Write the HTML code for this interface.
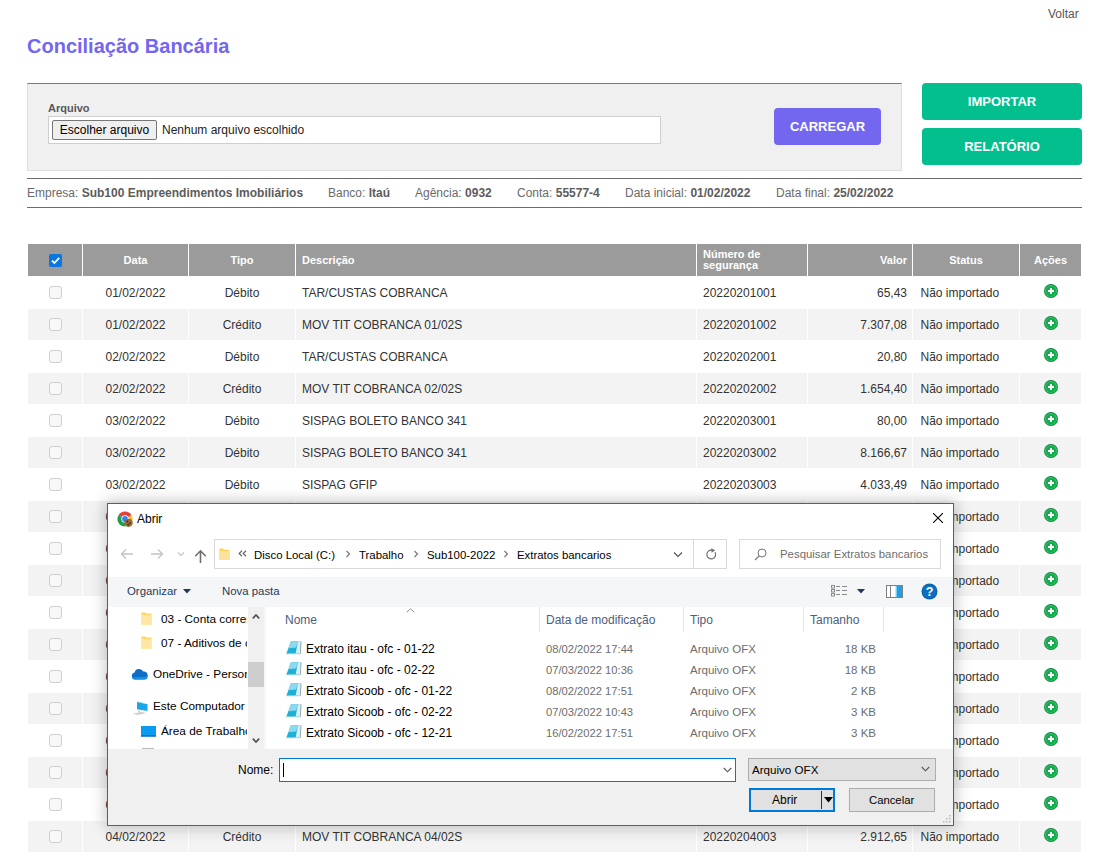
<!DOCTYPE html>
<html><head><meta charset="utf-8">
<style>
*{box-sizing:border-box}
html,body{margin:0;padding:0}
body{width:1105px;height:857px;overflow:hidden;position:relative;background:#fff;font-family:"Liberation Sans",sans-serif;font-size:12px;color:#333}
.a{position:absolute;white-space:nowrap}
#voltar{left:1048px;top:7px;line-height:14px;color:#555}
#title{left:27px;top:34px;line-height:24px;font-size:20px;font-weight:bold;color:#7367f0}
#panel{left:27px;top:83px;width:875px;height:88px;background:#f0f0f0;border:1px solid #dedede;border-top:1px solid #14a98f}
#lbl{left:48px;top:102px;line-height:13px;font-size:11px;font-weight:bold;color:#585858}
#inp{left:48px;top:116px;width:613px;height:28px;background:#fff;border:1px solid #cfcfcf}
#chooser{left:52px;top:120px;width:105px;height:20px;background:#efefef;border:1px solid #767676;border-radius:2px;color:#000;text-align:center;line-height:18px}
#nenhum{left:162px;top:123px;line-height:14px;color:#222}
.btn{position:absolute;color:#fff;font-weight:bold;font-size:13px;text-align:center;border-radius:4px}
#carregar{left:774px;top:108px;width:107px;height:37px;background:#7367f0;line-height:37px}
#importar{left:922px;top:83px;width:160px;height:37px;background:#02bf8d;line-height:37px}
#relatorio{left:922px;top:128px;width:160px;height:37px;background:#02bf8d;line-height:37px}
.hr{position:absolute;left:27px;width:1055px;height:1px;background:#6b6b6b}
.info{top:186px;line-height:14px;color:#6a6a6a}
.info b{color:#5c5c5c}
/* table */
#tbl{position:absolute;left:27px;top:243px;border-collapse:separate;border-spacing:1px;table-layout:fixed;width:1055px}
#tbl th{background:#9b9b9b;color:#fff;font-size:11px;font-weight:bold;height:32px;padding:0 6px;line-height:11px}
#tbl td{height:31px;padding:0 6px;color:#333;white-space:nowrap;line-height:14px}
#tbl tbody tr:nth-child(even) td{background:#f3f3f3}
#tbl tbody tr:nth-child(odd) td{background:#fff}
.c{text-align:center}
.l{text-align:left}
.r{text-align:right;padding-right:5px !important}
.st{padding-left:7.5px !important}
.cb{display:inline-block;width:13px;height:13px;border:1px solid #cfcfcf;border-radius:3px;background:#f8f8f8;vertical-align:middle;position:relative;top:-1px}
.cbh{display:inline-block;width:13px;height:13px;border-radius:2px;background:#0b75e0;vertical-align:middle;position:relative}
.plus{display:inline-block;width:14px;height:14px;vertical-align:middle;position:relative;top:-2px}
</style></head>
<body>
<div class="a" id="voltar">Voltar</div>
<div class="a" id="title">Conciliação Bancária</div>
<div class="a" id="panel"></div>
<div class="a" id="lbl">Arquivo</div>
<div class="a" id="inp"></div>
<div class="a" id="chooser">Escolher arquivo</div>
<div class="a" id="nenhum">Nenhum arquivo escolhido</div>
<div class="btn" id="carregar">CARREGAR</div>
<div class="btn" id="importar">IMPORTAR</div>
<div class="btn" id="relatorio">RELATÓRIO</div>
<div class="hr" style="top:178px"></div>
<div class="a info" style="left:27px">Empresa: <b>Sub100 Empreendimentos Imobiliários</b></div>
<div class="a info" style="left:328px">Banco: <b>Itaú</b></div>
<div class="a info" style="left:415px">Agência: <b>0932</b></div>
<div class="a info" style="left:517px">Conta: <b>55577-4</b></div>
<div class="a info" style="left:625px">Data inicial: <b>01/02/2022</b></div>
<div class="a info" style="left:776px">Data final: <b>25/02/2022</b></div>
<div class="hr" style="top:207px"></div>
<!--TABLE-->
<table id="tbl"><colgroup><col style="width:54px"><col style="width:105px"><col style="width:106px"><col style="width:400px"><col style="width:110px"><col style="width:104px"><col style="width:106px"><col style="width:61px"></colgroup>
<thead><tr><th class="c"><span class="cbh"><svg width="13" height="13" viewBox="0 0 13 13" style="position:absolute;left:0;top:0"><path d="M3 6.6l2.4 2.4L10.2 3.8" fill="none" stroke="#fff" stroke-width="1.8"/></svg></span></th><th class="c">Data</th><th class="c">Tipo</th><th class="l">Descrição</th><th class="l">Número de<br>segurança</th><th class="r">Valor</th><th class="c">Status</th><th class="c">Ações</th></tr></thead><tbody>
<tr><td class="c"><span class="cb"></span></td><td class="c">01/02/2022</td><td class="c">Débito</td><td class="l">TAR/CUSTAS COBRANCA</td><td class="l">20220201001</td><td class="r">65,43</td><td class="l st">Não importado</td><td class="c"><svg class="plus" width="14" height="14" viewBox="0 0 14 14"><circle cx="7" cy="7" r="7" fill="#0c8438"/><circle cx="7" cy="7" r="6.1" fill="#3acb73"/><circle cx="7" cy="7" r="5.2" fill="#14ad4b"/><path d="M6 4h2v2h2v2H8v2H6V8H4V6h2z" fill="#fff"/></svg></td></tr>
<tr><td class="c"><span class="cb"></span></td><td class="c">01/02/2022</td><td class="c">Crédito</td><td class="l">MOV TIT COBRANCA 01/02S</td><td class="l">20220201002</td><td class="r">7.307,08</td><td class="l st">Não importado</td><td class="c"><svg class="plus" width="14" height="14" viewBox="0 0 14 14"><circle cx="7" cy="7" r="7" fill="#0c8438"/><circle cx="7" cy="7" r="6.1" fill="#3acb73"/><circle cx="7" cy="7" r="5.2" fill="#14ad4b"/><path d="M6 4h2v2h2v2H8v2H6V8H4V6h2z" fill="#fff"/></svg></td></tr>
<tr><td class="c"><span class="cb"></span></td><td class="c">02/02/2022</td><td class="c">Débito</td><td class="l">TAR/CUSTAS COBRANCA</td><td class="l">20220202001</td><td class="r">20,80</td><td class="l st">Não importado</td><td class="c"><svg class="plus" width="14" height="14" viewBox="0 0 14 14"><circle cx="7" cy="7" r="7" fill="#0c8438"/><circle cx="7" cy="7" r="6.1" fill="#3acb73"/><circle cx="7" cy="7" r="5.2" fill="#14ad4b"/><path d="M6 4h2v2h2v2H8v2H6V8H4V6h2z" fill="#fff"/></svg></td></tr>
<tr><td class="c"><span class="cb"></span></td><td class="c">02/02/2022</td><td class="c">Crédito</td><td class="l">MOV TIT COBRANCA 02/02S</td><td class="l">20220202002</td><td class="r">1.654,40</td><td class="l st">Não importado</td><td class="c"><svg class="plus" width="14" height="14" viewBox="0 0 14 14"><circle cx="7" cy="7" r="7" fill="#0c8438"/><circle cx="7" cy="7" r="6.1" fill="#3acb73"/><circle cx="7" cy="7" r="5.2" fill="#14ad4b"/><path d="M6 4h2v2h2v2H8v2H6V8H4V6h2z" fill="#fff"/></svg></td></tr>
<tr><td class="c"><span class="cb"></span></td><td class="c">03/02/2022</td><td class="c">Débito</td><td class="l">SISPAG BOLETO BANCO 341</td><td class="l">20220203001</td><td class="r">80,00</td><td class="l st">Não importado</td><td class="c"><svg class="plus" width="14" height="14" viewBox="0 0 14 14"><circle cx="7" cy="7" r="7" fill="#0c8438"/><circle cx="7" cy="7" r="6.1" fill="#3acb73"/><circle cx="7" cy="7" r="5.2" fill="#14ad4b"/><path d="M6 4h2v2h2v2H8v2H6V8H4V6h2z" fill="#fff"/></svg></td></tr>
<tr><td class="c"><span class="cb"></span></td><td class="c">03/02/2022</td><td class="c">Débito</td><td class="l">SISPAG BOLETO BANCO 341</td><td class="l">20220203002</td><td class="r">8.166,67</td><td class="l st">Não importado</td><td class="c"><svg class="plus" width="14" height="14" viewBox="0 0 14 14"><circle cx="7" cy="7" r="7" fill="#0c8438"/><circle cx="7" cy="7" r="6.1" fill="#3acb73"/><circle cx="7" cy="7" r="5.2" fill="#14ad4b"/><path d="M6 4h2v2h2v2H8v2H6V8H4V6h2z" fill="#fff"/></svg></td></tr>
<tr><td class="c"><span class="cb"></span></td><td class="c">03/02/2022</td><td class="c">Débito</td><td class="l">SISPAG GFIP</td><td class="l">20220203003</td><td class="r">4.033,49</td><td class="l st">Não importado</td><td class="c"><svg class="plus" width="14" height="14" viewBox="0 0 14 14"><circle cx="7" cy="7" r="7" fill="#0c8438"/><circle cx="7" cy="7" r="6.1" fill="#3acb73"/><circle cx="7" cy="7" r="5.2" fill="#14ad4b"/><path d="M6 4h2v2h2v2H8v2H6V8H4V6h2z" fill="#fff"/></svg></td></tr>
<tr><td class="c"><span class="cb"></span></td><td class="c">03/02/2022</td><td class="c">Débito</td><td class="l">SISPAG TRIBUTOS</td><td class="l">20220203004</td><td class="r">1.210,33</td><td class="l st">Não importado</td><td class="c"><svg class="plus" width="14" height="14" viewBox="0 0 14 14"><circle cx="7" cy="7" r="7" fill="#0c8438"/><circle cx="7" cy="7" r="6.1" fill="#3acb73"/><circle cx="7" cy="7" r="5.2" fill="#14ad4b"/><path d="M6 4h2v2h2v2H8v2H6V8H4V6h2z" fill="#fff"/></svg></td></tr>
<tr><td class="c"><span class="cb"></span></td><td class="c">03/02/2022</td><td class="c">Débito</td><td class="l">SISPAG FORNECEDORES</td><td class="l">20220203005</td><td class="r">3.450,00</td><td class="l st">Não importado</td><td class="c"><svg class="plus" width="14" height="14" viewBox="0 0 14 14"><circle cx="7" cy="7" r="7" fill="#0c8438"/><circle cx="7" cy="7" r="6.1" fill="#3acb73"/><circle cx="7" cy="7" r="5.2" fill="#14ad4b"/><path d="M6 4h2v2h2v2H8v2H6V8H4V6h2z" fill="#fff"/></svg></td></tr>
<tr><td class="c"><span class="cb"></span></td><td class="c">03/02/2022</td><td class="c">Débito</td><td class="l">TAR/CUSTAS COBRANCA</td><td class="l">20220203006</td><td class="r">12,40</td><td class="l st">Não importado</td><td class="c"><svg class="plus" width="14" height="14" viewBox="0 0 14 14"><circle cx="7" cy="7" r="7" fill="#0c8438"/><circle cx="7" cy="7" r="6.1" fill="#3acb73"/><circle cx="7" cy="7" r="5.2" fill="#14ad4b"/><path d="M6 4h2v2h2v2H8v2H6V8H4V6h2z" fill="#fff"/></svg></td></tr>
<tr><td class="c"><span class="cb"></span></td><td class="c">03/02/2022</td><td class="c">Crédito</td><td class="l">MOV TIT COBRANCA 03/02S</td><td class="l">20220203007</td><td class="r">5.880,12</td><td class="l st">Não importado</td><td class="c"><svg class="plus" width="14" height="14" viewBox="0 0 14 14"><circle cx="7" cy="7" r="7" fill="#0c8438"/><circle cx="7" cy="7" r="6.1" fill="#3acb73"/><circle cx="7" cy="7" r="5.2" fill="#14ad4b"/><path d="M6 4h2v2h2v2H8v2H6V8H4V6h2z" fill="#fff"/></svg></td></tr>
<tr><td class="c"><span class="cb"></span></td><td class="c">04/02/2022</td><td class="c">Débito</td><td class="l">SISPAG SALARIOS</td><td class="l">20220204001</td><td class="r">9.320,55</td><td class="l st">Não importado</td><td class="c"><svg class="plus" width="14" height="14" viewBox="0 0 14 14"><circle cx="7" cy="7" r="7" fill="#0c8438"/><circle cx="7" cy="7" r="6.1" fill="#3acb73"/><circle cx="7" cy="7" r="5.2" fill="#14ad4b"/><path d="M6 4h2v2h2v2H8v2H6V8H4V6h2z" fill="#fff"/></svg></td></tr>
<tr><td class="c"><span class="cb"></span></td><td class="c">04/02/2022</td><td class="c">Débito</td><td class="l">TAR/CUSTAS COBRANCA</td><td class="l">20220204002</td><td class="r">18,60</td><td class="l st">Não importado</td><td class="c"><svg class="plus" width="14" height="14" viewBox="0 0 14 14"><circle cx="7" cy="7" r="7" fill="#0c8438"/><circle cx="7" cy="7" r="6.1" fill="#3acb73"/><circle cx="7" cy="7" r="5.2" fill="#14ad4b"/><path d="M6 4h2v2h2v2H8v2H6V8H4V6h2z" fill="#fff"/></svg></td></tr>
<tr><td class="c"><span class="cb"></span></td><td class="c">04/02/2022</td><td class="c">Débito</td><td class="l">SISPAG BOLETO BANCO 341</td><td class="l">20220204004</td><td class="r">640,00</td><td class="l st">Não importado</td><td class="c"><svg class="plus" width="14" height="14" viewBox="0 0 14 14"><circle cx="7" cy="7" r="7" fill="#0c8438"/><circle cx="7" cy="7" r="6.1" fill="#3acb73"/><circle cx="7" cy="7" r="5.2" fill="#14ad4b"/><path d="M6 4h2v2h2v2H8v2H6V8H4V6h2z" fill="#fff"/></svg></td></tr>
<tr><td class="c"><span class="cb"></span></td><td class="c">04/02/2022</td><td class="c">Débito</td><td class="l">SISPAG BOLETO BANCO 341</td><td class="l">20220204005</td><td class="r">1.120,00</td><td class="l st">Não importado</td><td class="c"><svg class="plus" width="14" height="14" viewBox="0 0 14 14"><circle cx="7" cy="7" r="7" fill="#0c8438"/><circle cx="7" cy="7" r="6.1" fill="#3acb73"/><circle cx="7" cy="7" r="5.2" fill="#14ad4b"/><path d="M6 4h2v2h2v2H8v2H6V8H4V6h2z" fill="#fff"/></svg></td></tr>
<tr><td class="c"><span class="cb"></span></td><td class="c">04/02/2022</td><td class="c">Débito</td><td class="l">TED DIVERSOS</td><td class="l">20220204006</td><td class="r">2.000,00</td><td class="l st">Não importado</td><td class="c"><svg class="plus" width="14" height="14" viewBox="0 0 14 14"><circle cx="7" cy="7" r="7" fill="#0c8438"/><circle cx="7" cy="7" r="6.1" fill="#3acb73"/><circle cx="7" cy="7" r="5.2" fill="#14ad4b"/><path d="M6 4h2v2h2v2H8v2H6V8H4V6h2z" fill="#fff"/></svg></td></tr>
<tr><td class="c"><span class="cb"></span></td><td class="c">04/02/2022</td><td class="c">Crédito</td><td class="l">MOV TIT COBRANCA 04/02S</td><td class="l">20220204007</td><td class="r">3.145,20</td><td class="l st">Não importado</td><td class="c"><svg class="plus" width="14" height="14" viewBox="0 0 14 14"><circle cx="7" cy="7" r="7" fill="#0c8438"/><circle cx="7" cy="7" r="6.1" fill="#3acb73"/><circle cx="7" cy="7" r="5.2" fill="#14ad4b"/><path d="M6 4h2v2h2v2H8v2H6V8H4V6h2z" fill="#fff"/></svg></td></tr>
<tr><td class="c"><span class="cb"></span></td><td class="c">04/02/2022</td><td class="c">Crédito</td><td class="l">MOV TIT COBRANCA 04/02S</td><td class="l">20220204003</td><td class="r">2.912,65</td><td class="l st">Não importado</td><td class="c"><svg class="plus" width="14" height="14" viewBox="0 0 14 14"><circle cx="7" cy="7" r="7" fill="#0c8438"/><circle cx="7" cy="7" r="6.1" fill="#3acb73"/><circle cx="7" cy="7" r="5.2" fill="#14ad4b"/><path d="M6 4h2v2h2v2H8v2H6V8H4V6h2z" fill="#fff"/></svg></td></tr>
</tbody></table>
<!--DIALOG-->
<style>
#dlg{position:absolute;left:107px;top:503px;width:847px;height:323px;background:#fff;border:1px solid #5e5e5e;box-shadow:0 0 14px 2px rgba(0,0,0,0.22);color:#000;font-size:12px}
#dlg .a{position:absolute;white-space:nowrap;line-height:14px}
.addr{left:106px;top:35px;width:513px;height:30px;border:1px solid #d9d9d9}
#tb{left:0;top:73px;width:845px;height:30px;background:#f5f6f7}
.navt{color:#000;font-size:11.8px}
.lh{color:#4c607a}
.fn{font-size:12px;color:#000}
.gr{color:#6d6d6d}
.bot{left:0;top:245px;width:845px;height:76px;background:#f0f0f0}
</style>
<div id="dlg">
 <!-- title bar: coords relative to inner padding box (border 1px => inner origin at page 108,504) -->
 <svg class="a" style="left:9px;top:7px" width="16" height="16" viewBox="0 0 16 16">
  <path d="M8 8L14.5 4.25A7.5 7.5 0 0 0 1.5 4.25z" fill="#e0443a"/>
  <path d="M8 8L8 15.5A7.5 7.5 0 0 0 14.5 4.25z" fill="#fbc02d"/>
  <path d="M8 8L1.5 4.25A7.5 7.5 0 0 0 8 15.5z" fill="#1e9e4a"/>
  <circle cx="8" cy="8" r="3.7" fill="#fff"/><circle cx="8" cy="8" r="2.9" fill="#3b82f0"/>
  <circle cx="11.6" cy="11.8" r="4.1" fill="#9a6a3a"/><circle cx="10.3" cy="10.6" r="1" fill="#4a2c14"/><circle cx="13" cy="12.2" r="0.9" fill="#4a2c14"/><circle cx="11.2" cy="13.7" r="0.9" fill="#4a2c14"/>
 </svg>
 <div class="a" style="left:29px;top:8px">Abrir</div>
 <svg class="a" style="left:825px;top:9px" width="10" height="10" viewBox="0 0 10 10"><path d="M0 0L10 10M10 0L0 10" stroke="#000" stroke-width="1.1"/></svg>

 <!-- nav arrows -->
 <svg class="a" style="left:12px;top:44px" width="14" height="12" viewBox="0 0 14 12"><path d="M13 6H1.5M6 1.5L1.5 6 6 10.5" fill="none" stroke="#c4c4c4" stroke-width="1.3"/></svg>
 <svg class="a" style="left:42px;top:44px" width="14" height="12" viewBox="0 0 14 12"><path d="M1 6H12.5M8 1.5L12.5 6 8 10.5" fill="none" stroke="#c4c4c4" stroke-width="1.3"/></svg>
 <svg class="a" style="left:69px;top:47px" width="8" height="6" viewBox="0 0 8 6"><path d="M1 1.5L4 4.5 7 1.5" fill="none" stroke="#c4c4c4" stroke-width="1.1"/></svg>
 <svg class="a" style="left:86px;top:45px" width="13" height="14" viewBox="0 0 13 14"><path d="M6.5 14V2M1.2 7.2L6.5 1.8 11.8 7.2" fill="none" stroke="#6e6e6e" stroke-width="1.6"/></svg>

 <!-- address bar -->
 <div class="a addr"></div>
 <div class="a" style="left:585px;top:36px;width:1px;height:28px;background:#d9d9d9"></div>
 <svg class="a" style="left:111px;top:43px" width="11" height="14" viewBox="0 0 11 14"><path d="M0.5 1.5h3.5l1 1.2h5.5V13H0.5z" fill="#ffd15c"/><rect x="0.5" y="4" width="10" height="9" fill="#ffe29a"/></svg>
 <svg class="a" style="left:130px;top:46px" width="9" height="7" viewBox="0 0 9 7"><path d="M4 0.8L1.2 3.5 4 6.2M8 0.8L5.2 3.5 8 6.2" fill="none" stroke="#666" stroke-width="1.2"/></svg>
 <div class="a fn" style="left:146px;top:44px;font-size:11.4px">Disco Local (C:)</div>
 <svg class="a" style="left:237px;top:46px" width="6" height="8" viewBox="0 0 6 8"><path d="M1.5 1L4.5 4 1.5 7" fill="none" stroke="#777" stroke-width="1.2"/></svg>
 <div class="a fn" style="left:251px;top:44px;font-size:11.4px">Trabalho</div>
 <svg class="a" style="left:305px;top:46px" width="6" height="8" viewBox="0 0 6 8"><path d="M1.5 1L4.5 4 1.5 7" fill="none" stroke="#777" stroke-width="1.2"/></svg>
 <div class="a fn" style="left:319px;top:44px;font-size:11.4px">Sub100-2022</div>
 <svg class="a" style="left:395px;top:46px" width="6" height="8" viewBox="0 0 6 8"><path d="M1.5 1L4.5 4 1.5 7" fill="none" stroke="#777" stroke-width="1.2"/></svg>
 <div class="a fn" style="left:409px;top:44px;font-size:11.4px">Extratos bancarios</div>
 <svg class="a" style="left:565px;top:47px" width="10" height="7" viewBox="0 0 10 7"><path d="M1 1.5L5 5.5 9 1.5" fill="none" stroke="#555" stroke-width="1.2"/></svg>
 <svg class="a" style="left:597px;top:44px" width="13" height="13" viewBox="0 0 13 13"><path d="M10 4.2A4.4 4.4 0 1 1 7.2 2.2" fill="none" stroke="#707070" stroke-width="1.2"/><path d="M6.2 0.2L10.2 2.3 6.6 4.8z" fill="#707070"/></svg>

 <!-- search -->
 <div class="a addr" style="left:631px;width:202px"></div>
 <svg class="a" style="left:646px;top:44px" width="13" height="13" viewBox="0 0 13 13"><circle cx="8" cy="5" r="4" fill="none" stroke="#777" stroke-width="1"/><path d="M5.2 7.8L1 12" stroke="#777" stroke-width="1.2"/></svg>
 <div class="a gr" style="left:672px;top:43px;font-size:11.4px">Pesquisar Extratos bancarios</div>

 <!-- toolbar -->
 <div class="a" id="tb"></div>
 <div class="a" style="left:19px;top:80px;font-size:11.4px;color:#1e395b">Organizar</div>
 <svg class="a" style="left:75px;top:85px" width="8" height="5" viewBox="0 0 8 5"><path d="M0 0H8L4 4.5z" fill="#1e395b"/></svg>
 <div class="a" style="left:114px;top:80px;font-size:11.4px;color:#1e395b">Nova pasta</div>
 <svg class="a" style="left:723px;top:81px" width="17" height="12" viewBox="0 0 17 12">
  <g fill="none" stroke="#8a8a8a" stroke-width="1"><rect x="0.5" y="0.5" width="3" height="2.5"/><rect x="0.5" y="4.5" width="3" height="2.5"/><rect x="0.5" y="8.5" width="3" height="2.5"/></g>
  <g stroke="#8a8a8a" stroke-width="1"><path d="M5 1.5h4M11 1.5h5M5 5.5h4M11 5.5h5M5 9.5h4M11 9.5h5"/></g>
 </svg>
 <svg class="a" style="left:749px;top:85px" width="8" height="5" viewBox="0 0 8 5"><path d="M0 0H8L4 4.5z" fill="#1e395b"/></svg>
 <svg class="a" style="left:778px;top:81px" width="17" height="13" viewBox="0 0 17 13"><rect x="0.5" y="0.5" width="16" height="12" fill="#fff" stroke="#808080"/><rect x="9" y="1" width="1.5" height="11" fill="#bfefff"/><rect x="10.5" y="1" width="5.5" height="11" fill="#1ea0e6"/><path d="M4.5 1v11" stroke="#808080" stroke-width="1"/></svg>
 <svg class="a" style="left:813px;top:79px" width="17" height="17" viewBox="0 0 17 17"><circle cx="8.5" cy="8.5" r="8" fill="#0b62ad"/><circle cx="8.5" cy="8.5" r="7" fill="#0d6fc0"/><text x="8.5" y="13.2" text-anchor="middle" font-family="Liberation Sans" font-weight="bold" font-size="12.5" fill="#fff">?</text></svg>

 <!-- nav pane -->
 <div class="a" style="left:0;top:103px;width:139px;height:142px;overflow:hidden">
  <svg class="a" style="left:33px;top:5px" width="11" height="13" viewBox="0 0 11 13"><path d="M0.5 0.5h4l1 1h5V12.5H0.5z" fill="#ffd766"/><rect x="0.5" y="3" width="10" height="9.5" fill="#ffe7a3"/></svg>
  <div class="a navt" style="left:53px;top:5px">03 - Conta corrente</div>
  <svg class="a" style="left:33px;top:29px" width="11" height="13" viewBox="0 0 11 13"><path d="M0.5 0.5h4l1 1h5V12.5H0.5z" fill="#ffd766"/><rect x="0.5" y="3" width="10" height="9.5" fill="#ffe7a3"/></svg>
  <div class="a navt" style="left:53px;top:29px">07 - Aditivos de contrato</div>
  <svg class="a" style="left:23px;top:61px" width="17" height="12" viewBox="0 0 17 12"><path d="M4 11.5A3.5 3.5 0 0 1 3.6 4.6 4.6 4.6 0 0 1 12.2 3.6 3.9 3.9 0 0 1 13.2 11.5z" fill="#0d6cc4"/><path d="M1 9.5A2.6 2.6 0 0 0 4 11.5H13.2A3.6 3.6 0 0 0 16.6 8.5z" fill="#1592e6"/></svg>
  <div class="a navt" style="left:45px;top:60px">OneDrive - Personal</div>
  <svg class="a" style="left:24px;top:94px" width="17" height="15" viewBox="0 0 17 15"><path d="M5 1L15.5 3.2V10L5 8.2z" fill="#1aa6e8"/><path d="M5 1L6.6 0.6 15.5 3.2z" fill="#7cc8f0"/><path d="M1 12.5L10 11l4 1.2-8.5 1.8z" fill="#c9ced3"/><path d="M7 9.5v2" stroke="#9aa" stroke-width="1"/></svg>
  <div class="a navt" style="left:45px;top:92px">Este Computador</div>
  <svg class="a" style="left:33px;top:119px" width="15" height="11" viewBox="0 0 15 11"><rect x="0" y="0" width="15" height="10.5" fill="#0a9bf0"/><rect x="0" y="9" width="15" height="1.6" fill="#0b6fc2"/></svg>
  <div class="a navt" style="left:53px;top:117px">Área de Trabalho</div>
  <svg class="a" style="left:34px;top:141px" width="12" height="3" viewBox="0 0 12 3"><rect x="0" y="0" width="12" height="2" fill="#b8bcc0"/></svg>
 </div>
 <!-- nav scrollbar -->
 <div class="a" style="left:140px;top:103px;width:16px;height:142px;background:#f0f0f0"></div>
 <div class="a" style="left:140px;top:158px;width:16px;height:25px;background:#cdcdcd"></div>
 <svg class="a" style="left:144px;top:110px" width="8" height="5" viewBox="0 0 8 5"><path d="M0.8 4.3L4 1 7.2 4.3" fill="none" stroke="#505050" stroke-width="1.7"/></svg>
 <svg class="a" style="left:144px;top:234px" width="8" height="5" viewBox="0 0 8 5"><path d="M0.8 0.7L4 4 7.2 0.7" fill="none" stroke="#505050" stroke-width="1.7"/></svg>
 <div class="a" style="left:156px;top:103px;width:2px;height:142px;background:#f7f7f7"></div>

 <!-- list header -->
 <svg class="a" style="left:298px;top:104px" width="9" height="5" viewBox="0 0 9 5"><path d="M0.8 4.3L4.5 0.8 8.2 4.3" fill="none" stroke="#8a8a8a" stroke-width="1"/></svg>
 <div class="a lh" style="left:177px;top:109px">Nome</div>
 <div class="a" style="left:431px;top:103px;width:1px;height:25px;background:#e5e5e5"></div>
 <div class="a lh" style="left:438px;top:109px">Data de modificação</div>
 <div class="a" style="left:575px;top:103px;width:1px;height:25px;background:#e5e5e5"></div>
 <div class="a lh" style="left:582px;top:109px">Tipo</div>
 <div class="a" style="left:695px;top:103px;width:1px;height:25px;background:#e5e5e5"></div>
 <div class="a lh" style="left:702px;top:109px">Tamanho</div>
 <div class="a" style="left:775px;top:103px;width:1px;height:25px;background:#e5e5e5"></div>
 <svg class="a" style="left:178px;top:137px" width="16" height="14" viewBox="0 0 16 14"><path d="M5 0.2H14.8L14.2 12.8H0.3z" fill="#1eb0d6"/><path d="M5 0.2H12L10 6.5 2.4 7.2z" fill="#8fd9ef"/><path d="M12 0.2H14.8L14.2 12.8H9.6z" fill="#d3f1fb"/><path d="M14.8 0.2L15.4 0.6 14.8 12.8H14.2z" fill="#8c8580"/><path d="M0.3 12.8H14.2" stroke="#9fd3e0" stroke-width="0.8"/></svg>
<div class="a fn" style="left:198px;top:138px">Extrato itau - ofc - 01-22</div>
<div class="a gr" style="left:438px;top:138px;font-size:11.2px">08/02/2022 17:44</div>
<div class="a gr" style="left:582px;top:138px;font-size:11.5px">Arquivo OFX</div>
<div class="a gr" style="left:700px;top:138px;width:68px;text-align:right;font-size:11.5px">18 KB</div>
<svg class="a" style="left:178px;top:158px" width="16" height="14" viewBox="0 0 16 14"><path d="M5 0.2H14.8L14.2 12.8H0.3z" fill="#1eb0d6"/><path d="M5 0.2H12L10 6.5 2.4 7.2z" fill="#8fd9ef"/><path d="M12 0.2H14.8L14.2 12.8H9.6z" fill="#d3f1fb"/><path d="M14.8 0.2L15.4 0.6 14.8 12.8H14.2z" fill="#8c8580"/><path d="M0.3 12.8H14.2" stroke="#9fd3e0" stroke-width="0.8"/></svg>
<div class="a fn" style="left:198px;top:159px">Extrato itau - ofc - 02-22</div>
<div class="a gr" style="left:438px;top:159px;font-size:11.2px">07/03/2022 10:36</div>
<div class="a gr" style="left:582px;top:159px;font-size:11.5px">Arquivo OFX</div>
<div class="a gr" style="left:700px;top:159px;width:68px;text-align:right;font-size:11.5px">18 KB</div>
<svg class="a" style="left:178px;top:179px" width="16" height="14" viewBox="0 0 16 14"><path d="M5 0.2H14.8L14.2 12.8H0.3z" fill="#1eb0d6"/><path d="M5 0.2H12L10 6.5 2.4 7.2z" fill="#8fd9ef"/><path d="M12 0.2H14.8L14.2 12.8H9.6z" fill="#d3f1fb"/><path d="M14.8 0.2L15.4 0.6 14.8 12.8H14.2z" fill="#8c8580"/><path d="M0.3 12.8H14.2" stroke="#9fd3e0" stroke-width="0.8"/></svg>
<div class="a fn" style="left:198px;top:180px">Extrato Sicoob - ofc - 01-22</div>
<div class="a gr" style="left:438px;top:180px;font-size:11.2px">08/02/2022 17:51</div>
<div class="a gr" style="left:582px;top:180px;font-size:11.5px">Arquivo OFX</div>
<div class="a gr" style="left:700px;top:180px;width:68px;text-align:right;font-size:11.5px">2 KB</div>
<svg class="a" style="left:178px;top:200px" width="16" height="14" viewBox="0 0 16 14"><path d="M5 0.2H14.8L14.2 12.8H0.3z" fill="#1eb0d6"/><path d="M5 0.2H12L10 6.5 2.4 7.2z" fill="#8fd9ef"/><path d="M12 0.2H14.8L14.2 12.8H9.6z" fill="#d3f1fb"/><path d="M14.8 0.2L15.4 0.6 14.8 12.8H14.2z" fill="#8c8580"/><path d="M0.3 12.8H14.2" stroke="#9fd3e0" stroke-width="0.8"/></svg>
<div class="a fn" style="left:198px;top:201px">Extrato Sicoob - ofc - 02-22</div>
<div class="a gr" style="left:438px;top:201px;font-size:11.2px">07/03/2022 10:43</div>
<div class="a gr" style="left:582px;top:201px;font-size:11.5px">Arquivo OFX</div>
<div class="a gr" style="left:700px;top:201px;width:68px;text-align:right;font-size:11.5px">3 KB</div>
<svg class="a" style="left:178px;top:221px" width="16" height="14" viewBox="0 0 16 14"><path d="M5 0.2H14.8L14.2 12.8H0.3z" fill="#1eb0d6"/><path d="M5 0.2H12L10 6.5 2.4 7.2z" fill="#8fd9ef"/><path d="M12 0.2H14.8L14.2 12.8H9.6z" fill="#d3f1fb"/><path d="M14.8 0.2L15.4 0.6 14.8 12.8H14.2z" fill="#8c8580"/><path d="M0.3 12.8H14.2" stroke="#9fd3e0" stroke-width="0.8"/></svg>
<div class="a fn" style="left:198px;top:222px">Extrato Sicoob - ofc - 12-21</div>
<div class="a gr" style="left:438px;top:222px;font-size:11.2px">16/02/2022 17:51</div>
<div class="a gr" style="left:582px;top:222px;font-size:11.5px">Arquivo OFX</div>
<div class="a gr" style="left:700px;top:222px;width:68px;text-align:right;font-size:11.5px">3 KB</div>

 <!-- bottom -->
 <div class="a bot"></div>
 <div class="a" style="left:130px;top:259px">Nome:</div>
 <div class="a" style="left:171px;top:254px;width:457px;height:24px;border:1px solid #0078d7;background:#fff"></div>
 <div class="a" style="left:175px;top:259px;width:1px;height:14px;background:#000"></div>
 <svg class="a" style="left:615px;top:263px" width="9" height="6" viewBox="0 0 9 6"><path d="M0.8 1L4.5 4.8 8.2 1" fill="none" stroke="#555" stroke-width="1.1"/></svg>
 <div class="a" style="left:640px;top:254px;width:188px;height:23px;border:1px solid #adadad;background:#e1e1e1"></div>
 <div class="a" style="left:644px;top:259px;font-size:11.6px">Arquivo OFX</div>
 <svg class="a" style="left:813px;top:262px" width="9" height="6" viewBox="0 0 9 6"><path d="M0.8 1L4.5 4.8 8.2 1" fill="none" stroke="#555" stroke-width="1.1"/></svg>
 <div class="a" style="left:641px;top:284px;width:86px;height:24px;border:2px solid #0078d7;background:#e1e1e1"></div>
 <div class="a" style="left:664px;top:289px">Abrir</div>
 <div class="a" style="left:713px;top:287px;width:1px;height:18px;background:#333"></div>
 <svg class="a" style="left:716px;top:293px" width="9" height="6" viewBox="0 0 9 6"><path d="M0 0H9L4.5 5.5z" fill="#000"/></svg>
 <div class="a" style="left:741px;top:284px;width:86px;height:24px;border:1px solid #adadad;background:#e1e1e1"></div>
 <div class="a" style="left:761px;top:289px;font-size:11.3px">Cancelar</div>
 <svg class="a" style="left:833px;top:309px" width="11" height="11" viewBox="0 0 11 11"><g fill="#b5b5b5"><rect x="8" y="2" width="1.5" height="1.5"/><rect x="5" y="5" width="1.5" height="1.5"/><rect x="8" y="5" width="1.5" height="1.5"/><rect x="2" y="8" width="1.5" height="1.5"/><rect x="5" y="8" width="1.5" height="1.5"/><rect x="8" y="8" width="1.5" height="1.5"/></g></svg>
</div>

</body></html>
